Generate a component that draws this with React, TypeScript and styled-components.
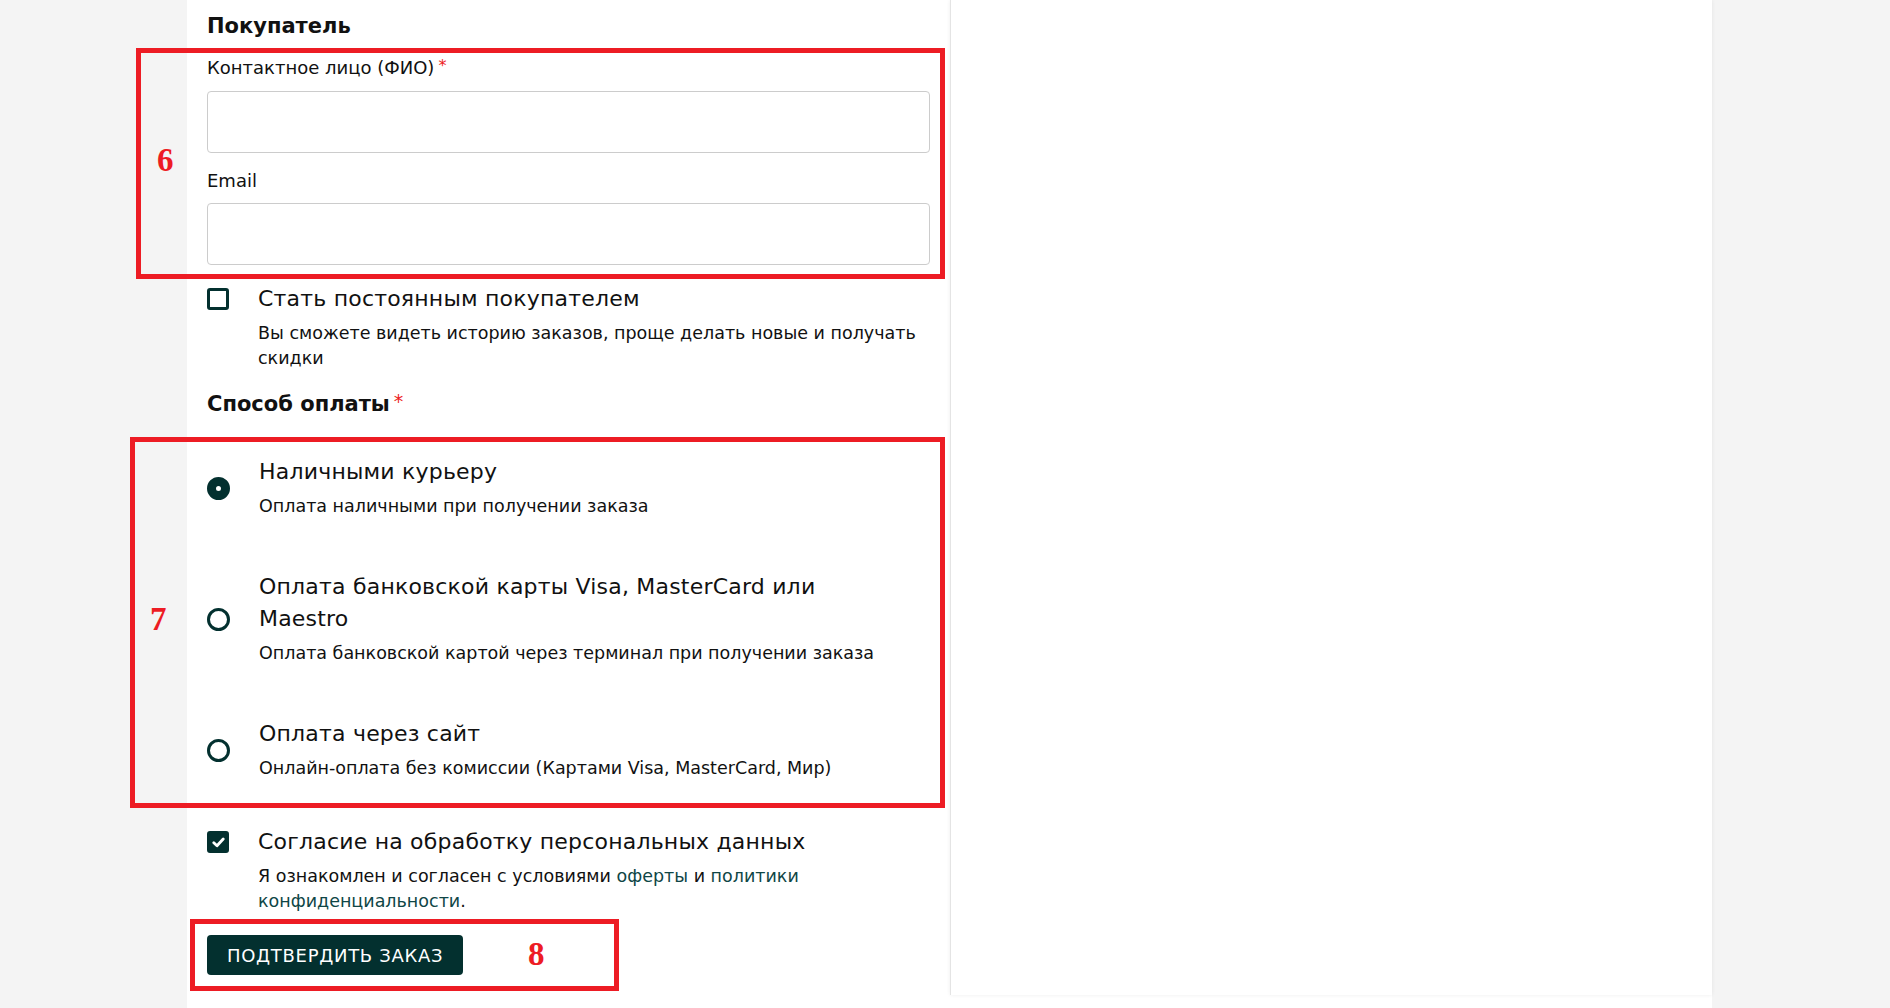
import React from "react";
import styled, { createGlobalStyle } from "styled-components";

const Global = createGlobalStyle`
  html, body {
    margin: 0;
    padding: 0;
    background: #f4f4f4;
  }
  body {
    font-family: "DejaVu Sans", "Liberation Sans", sans-serif;
    color: #111;
  }
  * { box-sizing: border-box; }
`;

const teal = "#03302f";
const red = "#ed1c24";

const Page = styled.div`
  display: flex;
  min-height: 100vh;
  padding-left: 187px;
`;

const Sheet = styled.div`
  display: flex;
  align-items: flex-start;
  width: 1525px;
  min-height: 100vh;
  background: #fff;
`;

const FormColumn = styled.form`
  display: flex;
  flex-direction: column;
  width: 763px;
  padding: 11px 20px 0;
`;

const Summary = styled.aside`
  width: 762px;
  height: 995px;
  background: #fff;
  border-left: 1px solid #e4e4e4;
  box-shadow: 0 0 4px rgba(0, 0, 0, 0.07);
`;

const SectionTitle = styled.h2<{ $gap?: number }>`
  margin: ${(p) => p.$gap ?? 0}px 0 0;
  font-size: 21px;
  line-height: 30px;
  font-weight: 700;
  color: #111;
`;

const Req = styled.span<{ $size?: number }>`
  position: relative;
  top: -3px;
  margin-left: 4px;
  color: ${red};
  font-weight: 400;
  font-size: ${(p) => p.$size ?? 16}px;
`;

/* numbered frame drawn around a group of fields */
const Callout = styled.div<{ $gap: number; $inline?: boolean }>`
  position: relative;
  margin-top: ${(p) => p.$gap}px;
  display: ${(p) => (p.$inline ? "inline-flex" : "flex")};
  align-self: ${(p) => (p.$inline ? "flex-start" : "stretch")};
  flex-direction: column;
`;

const Frame = styled.span<{ $inset: string; $markLeft: number; $lift?: number }>`
  position: absolute;
  inset: ${(p) => p.$inset};
  border: 5px solid ${red};
  display: flex;
  align-items: center;
  padding-left: ${(p) => p.$markLeft}px;
  padding-bottom: ${(p) => p.$lift ?? 0}px;
  pointer-events: none;
`;

const Mark = styled.span`
  font-family: "Liberation Serif", "DejaVu Serif", serif;
  font-weight: 700;
  font-size: 33px;
  line-height: 1;
  color: ${red};
`;

const Field = styled.label`
  display: flex;
  flex-direction: column;
  & + & {
    margin-top: 16px;
  }
`;

const FieldLabel = styled.span`
  font-size: 18px;
  line-height: 24px;
  margin-bottom: 10px;
  color: #111;
`;

const TextInput = styled.input`
  width: 100%;
  height: 62px;
  border: 1px solid #cccccc;
  border-radius: 4px;
  padding: 0 16px;
  font: inherit;
  font-size: 18px;
  background: #fff;
`;

const OptionRow = styled.div<{ $gap: number }>`
  display: flex;
  align-items: flex-start;
  gap: 29px;
  margin-top: ${(p) => p.$gap}px;
`;

const Box = styled.span<{ $checked?: boolean }>`
  flex: none;
  width: 22px;
  height: 22px;
  margin-top: 5px;
  border: 3px solid ${teal};
  border-radius: 3px;
  background: ${(p) => (p.$checked ? teal : "#fff")};
  display: flex;
  align-items: center;
  justify-content: center;
`;

const OptionText = styled.div`
  display: flex;
  flex-direction: column;
`;

const OptionTitle = styled.span`
  max-width: 640px;
  font-size: 22px;
  line-height: 32px;
  letter-spacing: 0.2px;
  color: #111;
`;

const OptionNote = styled.span`
  margin-top: 6px;
  font-size: 17.5px;
  line-height: 25px;
  color: #111;
`;

const DocLink = styled.a`
  color: #0f4646;
  text-decoration: none;
`;

const RadioList = styled.div`
  display: flex;
  flex-direction: column;
  gap: 52px;
`;

const RadioRow = styled.div`
  display: flex;
  align-items: center;
  gap: 29px;
`;

const Radio = styled.span<{ $checked?: boolean }>`
  flex: none;
  width: 23px;
  height: 23px;
  border-radius: 50%;
  border: ${(p) => (p.$checked ? "9px" : "3px")} solid ${teal};
  background: #fff;
  margin-top: 2px;
`;

const SubmitButton = styled.button`
  height: 40px;
  padding: 0 20px;
  border: none;
  border-radius: 4px;
  background: ${teal};
  color: #fff;
  font-family: "DejaVu Sans", "Liberation Sans", sans-serif;
  font-size: 18px;
  letter-spacing: 0.7px;
  cursor: pointer;
`;

const Check = () => (
  <svg width="13" height="11" viewBox="0 0 13 11" fill="none">
    <path d="M1.8 5.8 L5 8.8 L11.2 2" stroke="#fff" strokeWidth="2.8" strokeLinecap="round" strokeLinejoin="round" />
  </svg>
);

const payments = [
  {
    title: "Наличными курьеру",
    note: "Оплата наличными при получении заказа",
    checked: true,
  },
  {
    title: "Оплата банковской карты Visa, MasterCard или Maestro",
    note: "Оплата банковской картой через терминал при получении заказа",
    checked: false,
  },
  {
    title: "Оплата через сайт",
    note: "Онлайн-оплата без комиссии (Картами Visa, MasterCard, Мир)",
    checked: false,
  },
];

export default function App() {
  return (
    <>
      <Global />
      <Page>
        <Sheet>
          <FormColumn onSubmit={(e) => e.preventDefault()}>
            <SectionTitle>Покупатель</SectionTitle>

            <Callout $gap={15}>
              <Field>
                <FieldLabel>
                  Контактное лицо (ФИО)<Req>*</Req>
                </FieldLabel>
                <TextInput type="text" />
              </Field>
              <Field>
                <FieldLabel>Email</FieldLabel>
                <TextInput type="email" />
              </Field>
              <Frame $inset="-8px -15px -14px -71px" $markLeft={16} $lift={6}>
                <Mark>6</Mark>
              </Frame>
            </Callout>

            <OptionRow $gap={18}>
              <Box />
              <OptionText>
                <OptionTitle>Стать постоянным покупателем</OptionTitle>
                <OptionNote>
                  Вы сможете видеть историю заказов, проще делать новые и получать скидки
                </OptionNote>
              </OptionText>
            </OptionRow>

            <SectionTitle $gap={18}>
              Способ оплаты<Req $size={19}>*</Req>
            </SectionTitle>

            <Callout $gap={37}>
              <RadioList>
                {payments.map((p) => (
                  <RadioRow key={p.title}>
                    <Radio $checked={p.checked} />
                    <OptionText>
                      <OptionTitle>{p.title}</OptionTitle>
                      <OptionNote>{p.note}</OptionNote>
                    </OptionText>
                  </RadioRow>
                ))}
              </RadioList>
              <Frame $inset="-19px -15px -27px -77px" $markLeft={15} $lift={6}>
                <Mark>7</Mark>
              </Frame>
            </Callout>

            <OptionRow $gap={45}>
              <Box $checked>
                <Check />
              </Box>
              <OptionText>
                <OptionTitle>Согласие на обработку персональных данных</OptionTitle>
                <OptionNote>
                  Я ознакомлен и согласен с условиями <DocLink href="#">оферты</DocLink> и{" "}
                  <DocLink href="#">политики конфиденциальности</DocLink>.
                </OptionNote>
              </OptionText>
            </OptionRow>

            <Callout $gap={21} $inline>
              <SubmitButton type="submit">ПОДТВЕРДИТЬ ЗАКАЗ</SubmitButton>
              <Frame $inset="-16px -156px -16px -17px" $markLeft={333} $lift={2}>
                <Mark>8</Mark>
              </Frame>
            </Callout>
          </FormColumn>
          <Summary />
        </Sheet>
      </Page>
    </>
  );
}
